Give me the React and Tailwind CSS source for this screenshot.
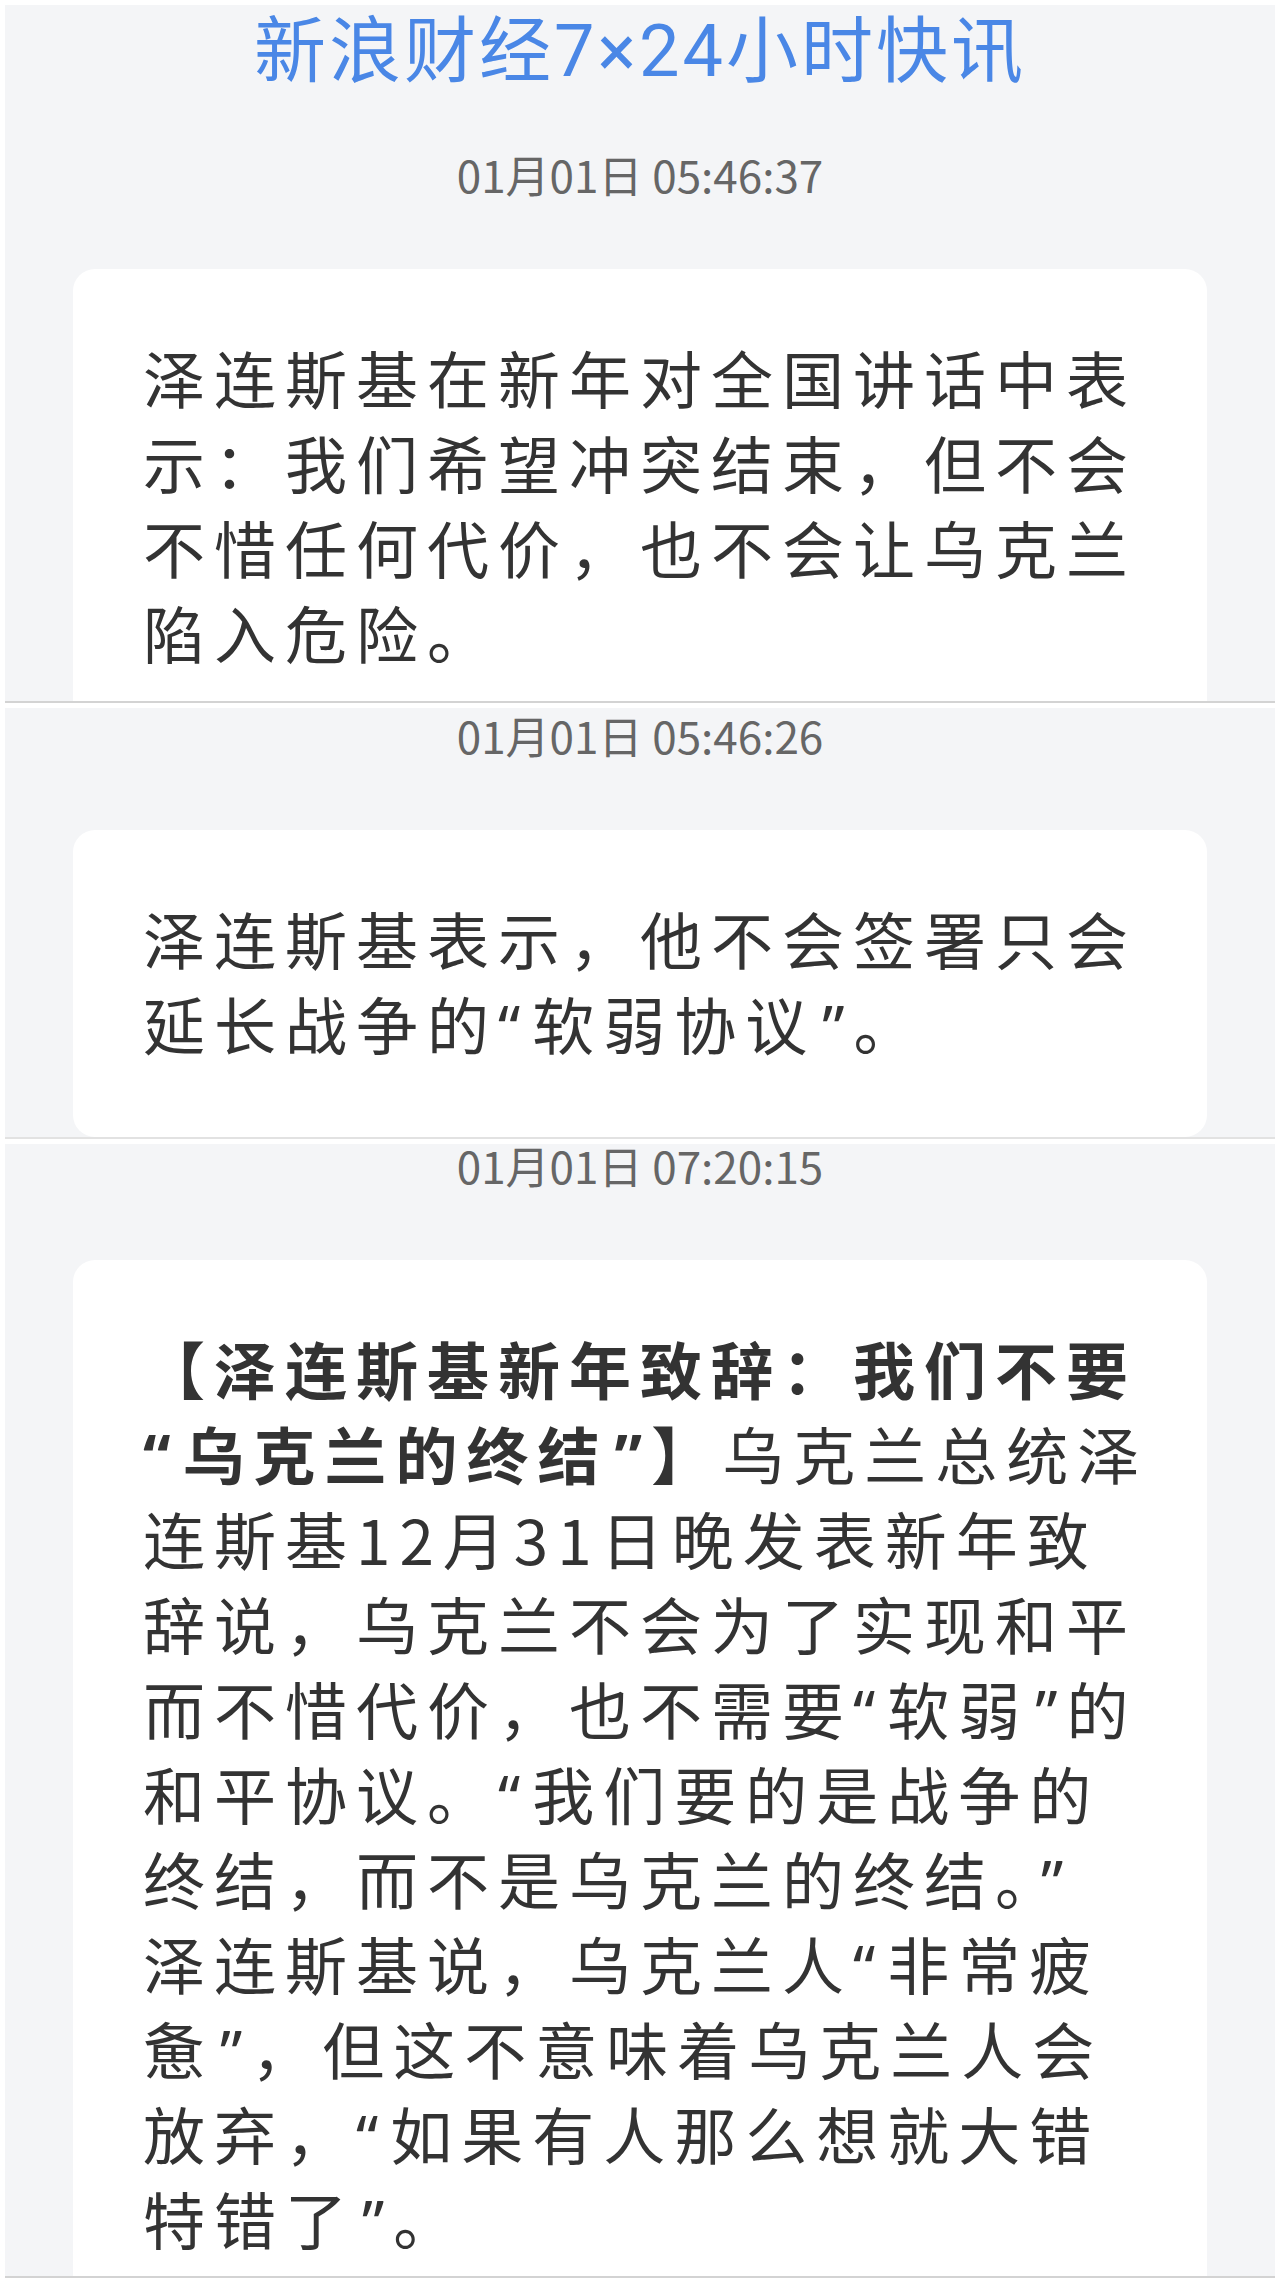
import React from "react";

const Line = ({ children }) => <div className="whitespace-nowrap">{children}</div>;
const O = () => <span className="font-['Noto_Sans',sans-serif] leading-[0] pr-[3px]">“</span>;
const C = () => <span className="font-['Noto_Sans',sans-serif] leading-[0] pl-[6px]">”</span>;

export default function App() {
  return (
    <div className="w-[1280px] h-[2283px] bg-white pt-[5px] px-[5px] overflow-hidden font-['Noto_Sans_CJK_SC',sans-serif]">
      {/* Panel 1 */}
      <section className="h-[698px] bg-[#f4f5f7] border-b-2 border-[#d3d3d3]">
        <h1 className="text-center text-[72px] leading-[80px] tracking-[3px] text-[#4a87e6] font-normal">
          新浪财经<span className="font-['Roboto',sans-serif] leading-[0]">7×24</span>小时快讯
        </h1>
        <p className="mt-[69px] text-center text-[44px] leading-[40px] text-[#666666]">01月01日 05:46:37</p>
        <div className="mx-[68px] mt-[75px] bg-white rounded-t-[22px] pt-[66px] pb-[26px] px-[70px] text-[62px] leading-[85px] tracking-[9px] text-[#333333]">
          <Line>泽连斯基在新年对全国讲话中表</Line>
          <Line>示：我们希望冲突结束，但不会</Line>
          <Line>不惜任何代价，也不会让乌克兰</Line>
          <Line>陷入危险。</Line>
        </div>
      </section>

      {/* Panel 2 */}
      <section className="mt-[5px] h-[431px] bg-[#f4f5f7] border-b-2 border-[#e2e2e2] pt-[7px]">
        <p className="text-center text-[44px] leading-[40px] text-[#666666]">01月01日 05:46:26</p>
        <div className="mx-[68px] mt-[75px] bg-white rounded-[22px] pt-[66px] pb-[71px] px-[70px] text-[62px] leading-[85px] tracking-[9px] text-[#333333]">
          <Line>泽连斯基表示，他不会签署只会</Line>
          <Line>
            延长战争的<O />软弱协议<C />。
          </Line>
        </div>
      </section>

      {/* Panel 3 */}
      <section className="mt-[5px] h-[1134px] bg-[#f4f5f7] border-b-2 border-[#d3d3d3] pt-[1px]">
        <p className="text-center text-[44px] leading-[40px] text-[#666666]">01月01日 07:20:15</p>
        <div className="mx-[68px] mt-[75px] bg-white rounded-t-[22px] pt-[66px] pb-[15px] px-[70px] text-[62px] leading-[85px] tracking-[9px] text-[#333333]">
          <Line>
            <span className="font-bold">【泽连斯基新年致辞：我们不要</span>
          </Line>
          <Line>
            <span className="font-bold">
              <O />乌克兰的终结<C />】
            </span>
            乌克兰总统泽
          </Line>
          <Line>连斯基12月31日晚发表新年致</Line>
          <Line>辞说，乌克兰不会为了实现和平</Line>
          <Line>
            而不惜代价，也不需要<O />软弱<C />的
          </Line>
          <Line>
            和平协议。<O />我们要的是战争的
          </Line>
          <Line>
            终结，而不是乌克兰的终结。<C />
          </Line>
          <Line>
            泽连斯基说，乌克兰人<O />非常疲
          </Line>
          <Line>
            惫<C />，但这不意味着乌克兰人会
          </Line>
          <Line>
            放弃，<O />如果有人那么想就大错
          </Line>
          <Line>
            特错了<C />。
          </Line>
        </div>
      </section>
    </div>
  );
}
